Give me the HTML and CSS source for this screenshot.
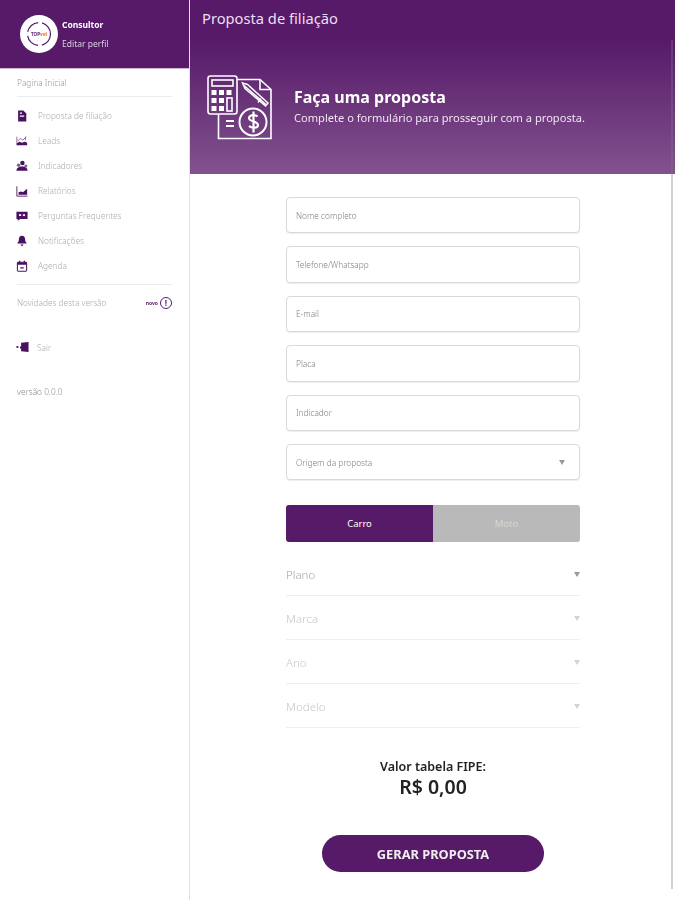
FILE: index.html
```html
<!DOCTYPE html>
<html lang="pt-BR">
<head>
<meta charset="utf-8">
<title>Proposta de filiação</title>
<link rel="stylesheet" href="styles.css">
</head>
<body>
<div class="app">
  <aside class="sidebar">
    <header class="profile">
      <div class="avatar">
        <svg class="avatar-ring" viewBox="0 0 38 38"><circle cx="19" cy="19" r="11.500" fill="none" stroke="#561a68" stroke-width="1.200" stroke-dasharray="15 4"/></svg>
        <span class="avatar-text">TOP<b>vel</b></span>
      </div>
      <div class="profile-text">
        <div class="profile-name">Consultor</div>
        <div class="profile-edit">Editar perfil</div>
      </div>
    </header>
    <div class="home-link">Pagina Inicial</div>
    <nav class="menu">
      <a class="menu-item"><svg class="icon" viewBox="0 0 14 14"><path fill="#4a1160" d="M2.500 .5h6l3.500 3.500v9.500H2.500z"/><path fill="#fff" d="M4.500 3h2.500v1.500H4.500zM4.500 6.500h5V8h-5z"/></svg>Proposta de filiação</a>
      <a class="menu-item"><svg class="icon" viewBox="0 0 14 14"><path fill="none" stroke="#6d4a7a" stroke-width=".9" d="M1 2v10M2 7l3-3 3 2 4-4M11 2v4"/><path fill="#4a1160" d="M1 9.500l3-1.500 3 1 3-1 3 1v3H1z"/></svg>Leads</a>
      <a class="menu-item"><svg class="icon" viewBox="0 0 14 14"><circle cx="7.500" cy="3.500" r="2.600" fill="#4a1160"/><circle cx="3" cy="6" r="2" fill="#7d6288"/><circle cx="11.500" cy="7" r="1.800" fill="#7d6288"/><path fill="#4a1160" d="M.5 12.500c0-3 2.500-5 6.500-5s6.500 2 6.500 5z"/></svg>Indicadores</a>
      <a class="menu-item"><svg class="icon" viewBox="0 0 14 14"><path fill="none" stroke="#4a1160" stroke-width="1" d="M1 1.500v11.500h12.500"/><path fill="#4a1160" d="M3 11.500V8.500l3-1 2 1 5-4v7z"/></svg>Relatórios</a>
      <a class="menu-item"><svg class="icon" viewBox="0 0 14 14"><path fill="#4a1160" d="M.5 2h13v8.500H5l-3 2v-2H.5z"/><path fill="#fff" d="M3.500 5h2.500v2H3.500zM8 5h2.500v2H8z"/></svg>Perguntas Frequentes</a>
      <a class="menu-item"><svg class="icon" viewBox="0 0 14 14"><path fill="#4a1160" d="M7 1c2.700 0 3.700 2.200 3.700 4.500 0 2 1 3 2 4.500H1.300c1-1.500 2-2.500 2-4.500C3.300 3.200 4.300 1 7 1z"/><path fill="#4a1160" d="M5.300 11h3.400a1.700 1.700 0 0 1-3.400 0z"/></svg>Notificações</a>
      <a class="menu-item"><svg class="icon" viewBox="0 0 14 14"><rect x="1.600" y="2.500" width="10.800" height="10.500" rx="1" fill="none" stroke="#4a1160" stroke-width="1.200"/><path fill="#4a1160" d="M2 3h10v2.500H2zM3.500 .8h1.500v2H3.500zM9 .8h1.500v2H9zM5 8.500h4V10H5z"/></svg>Agenda</a>
    </nav>
    <div class="news">
      <span>Novidades desta versão</span>
      <span class="news-side"><span class="news-new">novo</span><span class="news-mark">!</span></span>
    </div>
    <a class="logout"><svg class="icon logout-icon" viewBox="0 0 14 12"><path fill="#4a1160" d="M5.500 1.500L13.500 .5v11l-8-1V7.500h-1.200v-2H5.500z"/><path fill="#4a1160" d="M.5 5h2v2h-2z"/></svg>Sair</a>
    <div class="version">versão 0.0.0</div>
  </aside>

  <main class="content">
    <div class="topbar">Proposta de filiação</div>
    <section class="hero">
      <svg class="hero-icon" viewBox="0 0 65 65" fill="none" stroke="#fff" stroke-width="1.600">
        <path d="M30 4.500h23l11 10V63.500H11.500V39"/>
        <path d="M53 4.500v10h11"/>
        <rect x="1" y="1" width="29" height="38" rx="2.500"/>
        <rect x="5" y="5" width="21" height="6"/>
        <path fill="#fff" stroke="none" d="M4.500 15h5v5h-5zM12 15h5v5h-5zM19.500 15h5v5h-5zM4.500 23h5v5h-5zM12 23h5v5h-5zM4.500 31h5v5h-5zM12 31h5v5h-5z"/>
        <rect x="20" y="23" width="5" height="13"/>
        <path stroke-width="1.500" d="M35.500 8l5 1.500L61 28l-2.500 3L38 13.500zM37 10.500l22 19M54 23.500l-3 4"/>
        <circle cx="46" cy="47" r="13.500" stroke-width="2"/>
        <path stroke-width="2.200" d="M50.500 41.500c-2-2-8-2-8.500 1.500s9 3 9 7c0 3.500-6.500 3.500-9 1M46.500 36.500v21"/>
        <path stroke-width="2" d="M19 46h8M19 51h8"/>
      </svg>
      <div class="hero-text">
        <h1 class="hero-title">Faça uma proposta</h1>
        <p class="hero-sub">Complete o formulário para prosseguir com a proposta.</p>
      </div>
    </section>

    <form class="form">
      <div class="fields">
        <input class="field" placeholder="Nome completo">
        <input class="field" placeholder="Telefone/Whatsapp">
        <input class="field" placeholder="E-mail">
        <input class="field" placeholder="Placa">
        <input class="field" placeholder="Indicador">
        <div class="field field-select"><span>Origem da proposta</span><i class="caret caret-mid"></i></div>
      </div>
      <div class="toggle">
        <div class="toggle-opt toggle-on">Carro</div>
        <div class="toggle-opt toggle-off">Moto</div>
      </div>
      <div class="selects">
        <div class="line-select line-active"><span>Plano</span><i class="caret caret-mid"></i></div>
        <div class="line-select"><span>Marca</span><i class="caret"></i></div>
        <div class="line-select"><span>Ano</span><i class="caret"></i></div>
        <div class="line-select"><span>Modelo</span><i class="caret"></i></div>
      </div>
      <div class="fipe">
        <div class="fipe-label">Valor tabela FIPE:</div>
        <div class="fipe-value">R$ 0,00</div>
      </div>
      <button class="submit" type="button">GERAR PROPOSTA</button>
    </form>
    <div class="scroll-thumb"></div>
  </main>
</div>
</body>
</html>
```
FILE: styles.css
```css
* { box-sizing: border-box; }
html, body { margin: 0; height: 100%; background: #fff; overflow: hidden; }
body { font-family: "Noto Sans", "Open Sans", sans-serif; color: #999; }
.app { display: flex; height: 900px; filter: blur(0.5px); }

.sidebar { width: 190px; flex: none; border-right: 1px solid #e2e0e4; display: flex; flex-direction: column; }
.profile { height: 69px; background: #561a68; display: flex; align-items: center; gap: 4px; padding: 0 0 1px 20px; border-bottom: 1px solid #c9b8cf; }
.avatar { width: 38px; height: 38px; border-radius: 50%; background: #fff; position: relative; display: flex; align-items: center; justify-content: center; flex: none; }
.avatar-ring { position: absolute; inset: 0; }
.avatar-text { position: relative; font-size: 4.500px; font-weight: 700; color: #561a68; }
.avatar-text b { color: #e8803a; }
.profile-text { display: flex; flex-direction: column; gap: 8px; margin-top: 0; }
.profile-name { font-size: 8.500px; font-weight: 700; color: #fff; line-height: 11px; }
.profile-edit { font-size: 8.500px; color: #ddd0e2; line-height: 11px; }
.home-link { margin: 0 17px; height: 28px; padding-top: 8px; font-size: 8.300px; font-weight: 300; line-height: 12px; border-bottom: 1px solid #ececec; }
.menu { display: flex; flex-direction: column; padding: 6px 17px 6px; }
.menu-item { display: flex; align-items: center; height: 25px; gap: 10px; font-size: 8.300px; font-weight: 300; color: #acacac; }
.icon { width: 12px; height: 12px; flex: none; margin-left: -1px; }
.news { margin: 0 17px; border-top: 1px solid #ececec; height: 36px; display: flex; justify-content: space-between; align-items: center; font-size: 8.300px; font-weight: 300; color: #acacac; }
.news-side { display: flex; align-items: center; gap: 2px; }
.news-new { font-size: 5px; color: #561a68; font-weight: 700; }
.news-mark { width: 12px; height: 12px; border: 1.200px solid #561a68; border-radius: 50%; color: #561a68; font-size: 8px; font-weight: 700; line-height: 10px; text-align: center; }
.logout { display: flex; align-items: center; height: 14px; margin: 20px 0 0 17px; gap: 8px; font-size: 8.300px; font-weight: 300; color: #acacac; }
.logout-icon { width: 13px; margin-left: -1px; }
.version { margin: 32px 0 0 17px; font-size: 8.300px; font-weight: 300; line-height: 12px; color: #8c8c8c; }

.content { flex: 1; min-width: 0; position: relative; display: flex; flex-direction: column; }
.topbar { height: 40px; background: #561a68; color: #ecdff0; font-size: 14.700px; line-height: 36px; padding-left: 12px; }
.hero { height: 134px; background: linear-gradient(#561a68, #82528e); display: flex; align-items: center; padding-left: 17px; gap: 22px; }
.hero-icon { width: 65px; height: 65px; flex: none; }
.hero-text { color: #fff; margin-bottom: 1px; }
.hero-title { margin: 0 0 3px; font-size: 16px; line-height: 20px; font-weight: 700; }
.hero-sub { margin: 0; font-size: 11.100px; line-height: 16px; color: #efe6f1; }
.scroll-thumb { position: absolute; top: 40px; right: 2px; width: 2px; height: 849px; background: rgba(130, 120, 135, 0.35); }

.form { width: 294px; margin: 23px 0 0 96px; display: flex; flex-direction: column; }
.fields { display: flex; flex-direction: column; gap: 13px; }
.field { display: flex; align-items: center; justify-content: space-between; width: 100%; height: 36.400px; border: 1px solid #d9d9d9; border-radius: 4px; padding: 0 14px 0 9px; background: #fff; font: 300 8.300px "Noto Sans", sans-serif; color: #808080; box-shadow: 0 1px 1px #eee; outline: 0; }
.field::placeholder { color: #808080; opacity: 1; }
.field-select span { color: #808080; }
.caret { width: 0; height: 0; border-left: 3.500px solid transparent; border-right: 3.500px solid transparent; border-top: 5px solid #d4d4d4; }
.caret-mid { border-top-color: #9a9a9a; }
.toggle { display: flex; height: 37px; margin-top: 25px; border-radius: 3px; overflow: hidden; }
.toggle-opt { flex: 1; display: flex; align-items: center; justify-content: center; font-size: 9.500px; }
.toggle-on { background: #561a68; color: #fff; }
.toggle-off { background: #b9b9b9; color: #d6d6d6; }
.selects { display: flex; flex-direction: column; margin-top: 10px; }
.line-select { height: 44px; display: flex; align-items: center; justify-content: space-between; border-bottom: 1px solid #efefef; font-size: 11.500px; font-weight: 300; color: #c6c6c6; padding-top: 2px; }
.line-active { color: #a6a6a6; }
.fipe { margin-top: 31px; text-align: center; color: #222; }
.fipe-label { font-size: 12.500px; font-weight: 600; line-height: 15px; }
.fipe-value { font-size: 19.500px; font-weight: 600; line-height: 25px; }
.submit { align-self: center; width: 222px; height: 37px; margin-top: 36px; border: 0; border-radius: 19px; background: #561a68; color: #eee; font: 700 12.800px "Noto Sans", sans-serif; }
```
